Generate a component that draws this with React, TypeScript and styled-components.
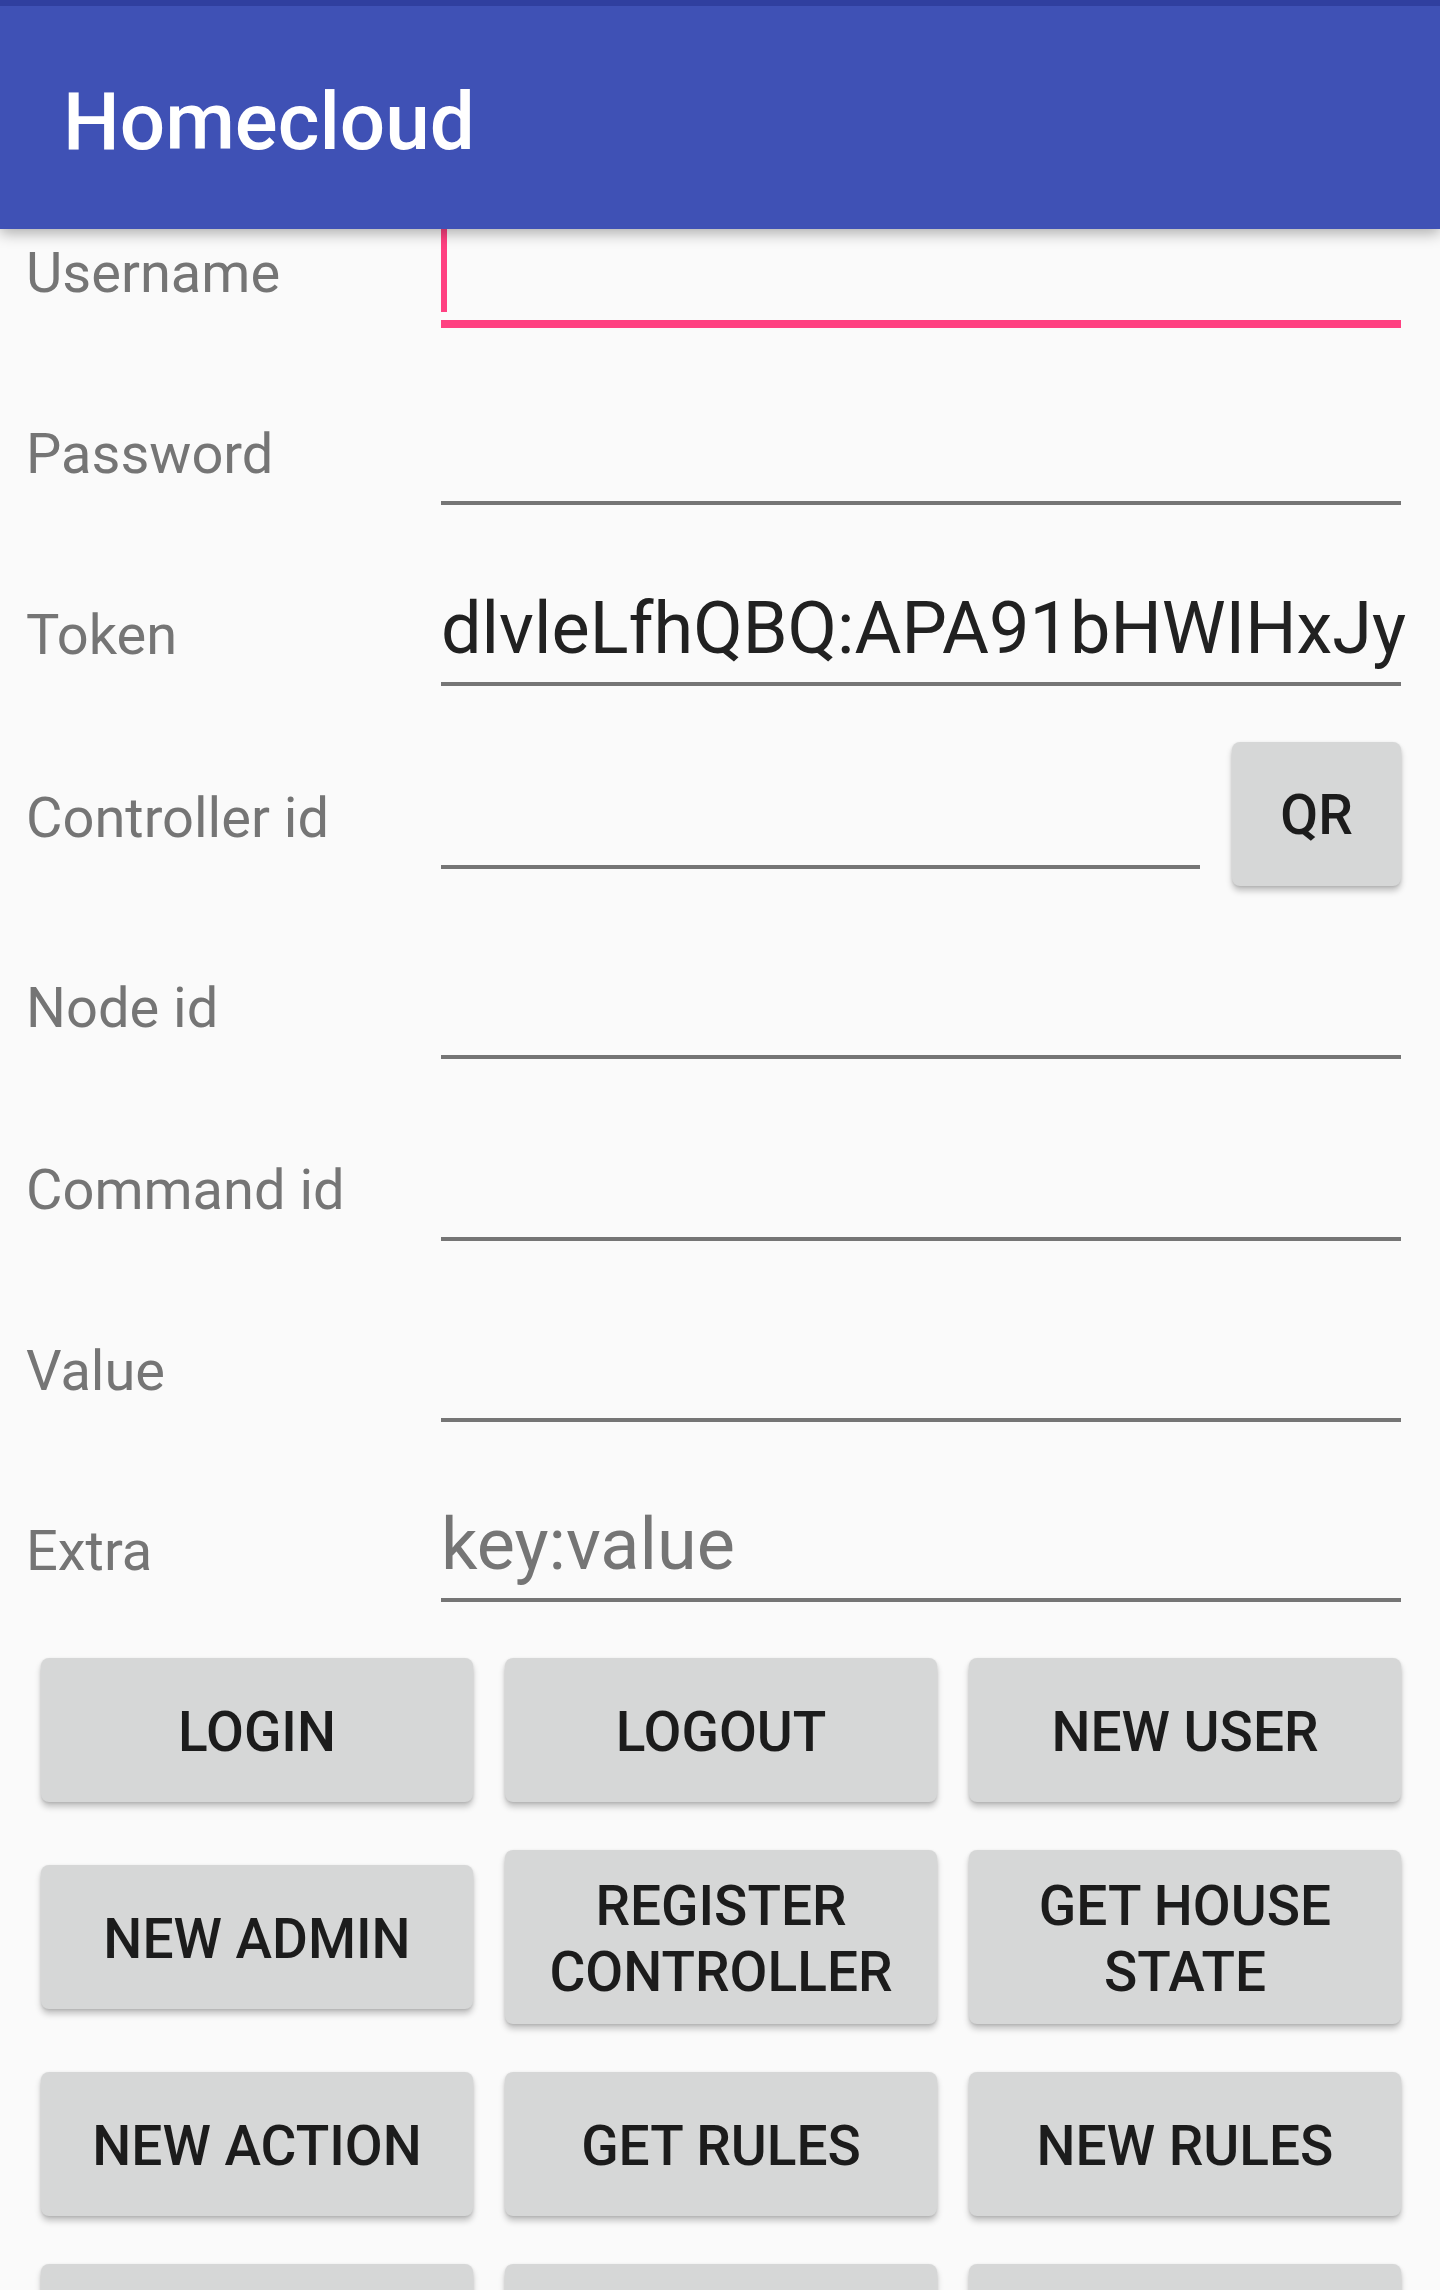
import React from "react";
import styled, { createGlobalStyle } from "styled-components";

const GlobalStyle = createGlobalStyle`
  html, body {
    margin: 0;
    padding: 0;
    overflow: hidden;
    background: #fafafa;
  }
  * { box-sizing: border-box; }
`;

const Screen = styled.div`
  width: 1440px;
  height: 100vh;
  overflow: hidden;
  background: #fafafa;
  font-family: Roboto, "Noto Sans", "Liberation Sans", sans-serif;
`;

const AppBar = styled.header`
  position: sticky;
  top: 0;
  z-index: 2;
  height: 229px;
  border-top: 6px solid #303f9f;
  background: #3f51b5;
  display: flex;
  align-items: center;
  padding: 9px 0 0 63px;
  box-shadow: 0 4px 14px rgba(0, 0, 0, 0.32);
`;

const Title = styled.h1`
  margin: 0;
  font-size: 80px;
  font-weight: 500;
  color: #ffffff;
  line-height: 94px;
`;

const Form = styled.div`
  display: flex;
  flex-direction: column;
  margin-top: -82px;
`;

const Row = styled.div<{ $h?: number }>`
  display: flex;
  align-items: flex-end;
  height: ${(p) => p.$h ?? 181}px;
  padding: 0 39px 0 26px;
`;

const Label = styled.label<{ $focused?: boolean }>`
  flex: 0 0 415px;
  font-size: 56px;
  line-height: 66px;
  color: #757575;
  margin-bottom: ${(p) => (p.$focused ? 22 : 18)}px;
  white-space: nowrap;
`;

const Field = styled.div<{ $focused?: boolean; $hint?: boolean }>`
  flex: 1;
  min-width: 0;
  font-size: 72px;
  line-height: 84px;
  color: ${(p) => (p.$hint ? "#757575" : "#212121")};
  padding-bottom: 11px;
  border-bottom: ${(p) => (p.$focused ? "8px solid #ff4081" : "4px solid #757575")};
  white-space: nowrap;
  overflow: visible;
`;

const Caret = styled.span`
  display: block;
  width: 6px;
  height: 85px;
  margin-bottom: -3px;
  background: #ff4081;
`;

const RaisedButton = styled.button`
  font-family: Roboto, "Noto Sans", "Liberation Sans", sans-serif;
  font-weight: 500;
  font-size: 55px;
  line-height: 66px;
  text-transform: uppercase;
  color: #1c1c1c;
  background: #d6d7d7;
  border: none;
  border-radius: 8px;
  min-height: 144px;
  padding: 23px 16px 19px;
  display: flex;
  align-items: center;
  justify-content: center;
  text-align: center;
  box-shadow: 0 5px 6px rgba(0, 0, 0, 0.22), 0 1px 3px rgba(0, 0, 0, 0.12);
`;

const QrButton = styled(RaisedButton)`
  flex: 0 0 169px;
  margin-left: 32px;
  margin-bottom: -17px;
  padding: 2px 0 0;
`;

const ButtonGrid = styled.div`
  display: grid;
  grid-template-columns: repeat(3, 432px);
  column-gap: 32px;
  row-gap: 48px;
  align-items: center;
  padding: 0 39px 0 41px;
  margin-top: 56px;
`;

const fields: { label: string; h: number; value?: string; hint?: string; focused?: boolean; qr?: boolean }[] = [
  { label: "Username", h: 181, focused: true },
  { label: "Password", h: 177 },
  { label: "Token", h: 181, value: "dlvleLfhQBQ:APA91bHWIHxJy" },
  { label: "Controller id", h: 183, qr: true },
  { label: "Node id", h: 190 },
  { label: "Command id", h: 182 },
  { label: "Value", h: 181 },
  { label: "Extra", h: 180, hint: "key:value" },
];

const actions = [
  "Login",
  "Logout",
  "New user",
  "New admin",
  "Register controller",
  "Get house state",
  "New action",
  "Get rules",
  "New rules",
];

// The next row of buttons is scrolled below the fold; only their tops show.
const hiddenActions = ["more-1", "more-2", "more-3"];

export default function App() {
  return (
    <Screen>
      <GlobalStyle />
      <AppBar>
        <Title>Homecloud</Title>
      </AppBar>
      <Form>
        {fields.map((f) => (
          <Row key={f.label} $h={f.h}>
            <Label $focused={f.focused}>{f.label}</Label>
            <Field $focused={f.focused} $hint={!!f.hint}>
              {f.focused ? <Caret /> : f.value ?? f.hint ?? "\u00a0"}
            </Field>
            {f.qr && <QrButton>QR</QrButton>}
          </Row>
        ))}
      </Form>
      <ButtonGrid>
        {actions.map((a) => (
          <RaisedButton key={a}>{a}</RaisedButton>
        ))}
        {hiddenActions.map((a) => (
          <RaisedButton key={a} aria-label={a} />
        ))}
      </ButtonGrid>
    </Screen>
  );
}
